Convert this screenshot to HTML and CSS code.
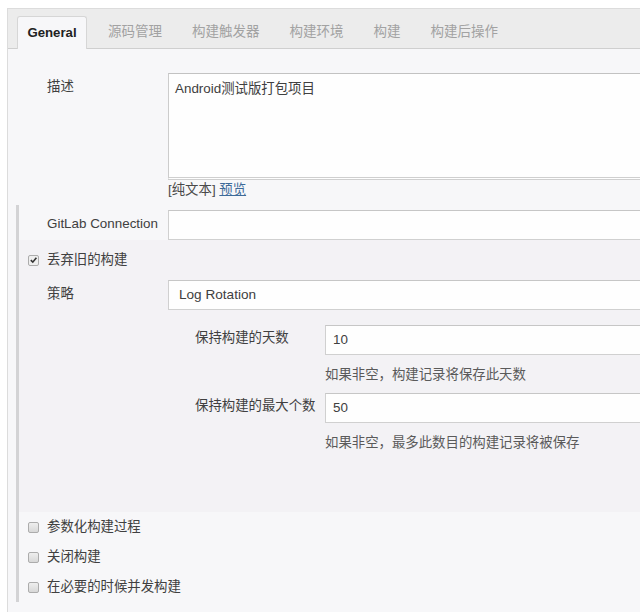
FILE: index.html
```html
<!DOCTYPE html>
<html lang="zh">
<head>
<meta charset="utf-8">
<title>General</title>
<link rel="stylesheet" href="styles.css">
</head>
<body>
<div class="panel">
  <div class="tabbar">
    <div class="tab tab-active">General</div>
    <div class="tab tab-first">源码管理</div>
    <div class="tab">构建触发器</div>
    <div class="tab">构建环境</div>
    <div class="tab">构建</div>
    <div class="tab">构建后操作</div>
  </div>
  <div class="content">
    <div class="row row-desc">
      <div class="label">描述</div>
      <div class="textarea">Android测试版打包项目</div>
    </div>
    <div class="desc-help">[纯文本] <a class="link" href="#">预览</a></div>

    <div class="section">
      <div class="row row-gitlab">
        <div class="label label-s">GitLab Connection</div>
        <div class="input"></div>
      </div>
      <div class="block">
        <div class="check-row check-row-first">
          <span class="cb cb-checked"><svg viewBox="0 0 10 10" width="10" height="10"><path d="M2 5.2 L4.2 7.4 L8.2 2.4" fill="none" stroke="#333" stroke-width="1.8"/></svg></span>
          <span class="check-text">丢弃旧的构建</span>
        </div>
        <div class="row row-strategy">
          <div class="label label-s">策略</div>
          <div class="input input-select">Log Rotation</div>
        </div>
        <div class="nested">
          <div class="row row-days">
            <div class="label label-n">保持构建的天数</div>
            <div class="input input-n">10</div>
          </div>
          <div class="help">如果非空，构建记录将保存此天数</div>
          <div class="row row-max">
            <div class="label label-n">保持构建的最大个数</div>
            <div class="input input-n">50</div>
          </div>
          <div class="help">如果非空，最多此数目的构建记录将被保存</div>
        </div>
      </div>
      <div class="check-row"><span class="cb"></span><span class="check-text">参数化构建过程</span></div>
      <div class="check-row"><span class="cb"></span><span class="check-text">关闭构建</span></div>
      <div class="check-row"><span class="cb"></span><span class="check-text">在必要的时候并发构建</span></div>
    </div>
  </div>
</div>
</body>
</html>
```

FILE: styles.css
```css
html, body {
  margin: 0;
  padding: 0;
  background: #ffffff;
  overflow: hidden;
}
body {
  font-family: "Liberation Sans", "Noto Sans CJK SC", sans-serif;
  font-size: 13.4px;
  color: #404040;
  width: 640px;
  height: 612px;
}
.panel {
  margin: 8px 0 0 7px;
  border-left: 1px solid #dcdcdc;
  border-top: 1px solid #dcdcdc;
  height: 603px;
  background: #f7f7f9;
  overflow: hidden;
}
.tabbar {
  display: flex;
  height: 32px;
  padding-top: 7px;
  background: #ececec;
  border-bottom: 1px solid #cfcfcf;
}
.tab {
  height: 32px;
  line-height: 31px;
  padding: 0 15px;
  font-size: 13.5px;
  color: #a2a2a2;
  white-space: nowrap;
}
.tab-active {
  margin-left: 9px;
  width: 70px;
  padding: 0;
  box-sizing: border-box;
  text-align: center;
  font-family: "Liberation Sans", sans-serif;
  font-weight: bold;
  font-size: 13.2px;
  color: #222;
  background: #f7f7f9;
  border: 1px solid #d6d6d6;
  border-bottom: none;
  border-radius: 3px 3px 0 0;
  position: relative;
  z-index: 1;
  height: 33px;
}
.tab-first {
  margin-left: 6px;
}
.content {
  padding-top: 24px;
}
.row {
  display: flex;
  align-items: flex-start;
}
.label {
  box-sizing: border-box;
  width: 160px;
  padding-left: 39px;
  padding-top: 5px;
  line-height: 18px;
  white-space: nowrap;
  flex: none;
}
.textarea {
  box-sizing: border-box;
  width: 600px;
  height: 107px;
  background: #fefefe;
  border: 1px solid #cccccc;
  border-top-color: #c2c2c2;
  border-bottom: 3px double #cfcfcf;
  padding: 6px 6px;
  line-height: 18px;
  flex: none;
}
.desc-help {
  margin: 1px 0 0 160px;
  line-height: 18px;
  color: #4a4a4a;
}
.link {
  color: #3d6a99;
  text-decoration: underline;
}
.section {
  margin: 6px 0 0 8px;
  border-left: 3px solid #d3d3d5;
  padding-top: 5px;
  padding-bottom: 0;
}
.label-s {
  width: 149px;
  padding-left: 28px;
  padding-top: 5px;
}
.input {
  box-sizing: border-box;
  width: 600px;
  height: 30px;
  background: #fefefe;
  border: 1px solid #d0d0d0;
  border-top-color: #c6c6c6;
  line-height: 28px;
  padding: 0 7px;
  flex: none;
}
.input-select {
  padding-left: 10px;
  font-size: 13.6px;
}
.block {
  background: #f3f2f5;
  padding-bottom: 60px;
}
.check-row {
  display: flex;
  align-items: center;
  height: 30px;
  padding-left: 9px;
}
.check-row-first {
  height: 40px;
}
.cb {
  box-sizing: border-box;
  width: 11px;
  height: 11px;
  border: 1px solid #acacac;
  border-radius: 2px;
  background: linear-gradient(#eeeeee, #d8d8d8);
  display: flex;
  align-items: center;
  justify-content: center;
  flex: none;
}
.cb svg {
  display: block;
}
.cb-checked {
  background: #efefef;
}
.check-text {
  margin-left: 8px;
  line-height: 18px;
}
.nested {
  padding-top: 15px;
}
.label-n {
  width: 306px;
  padding-left: 176px;
  padding-top: 4px;
}
.input-n {
  padding-left: 7px;
}
.help {
  margin: 11px 0 0 306px;
  line-height: 18px;
  color: #5a5a5a;
}
.row-max {
  margin-top: 9px;
}
```
